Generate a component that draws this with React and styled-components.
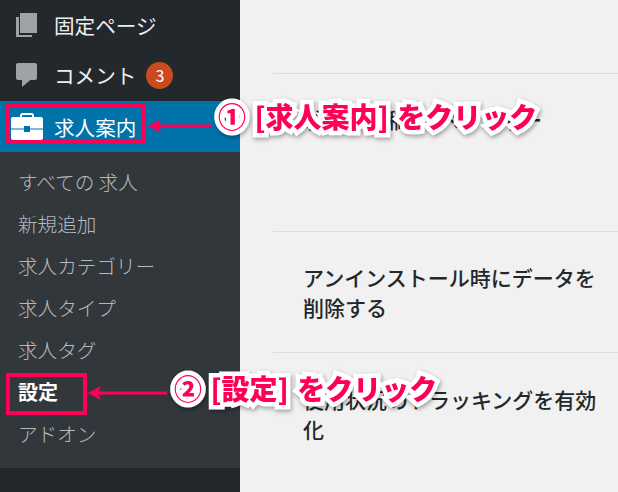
import React from 'react';
import styled, { createGlobalStyle } from 'styled-components';

const Global = createGlobalStyle`
  html, body { margin: 0; padding: 0; background: #f1f1f1; }
  body { font-family: "Noto Sans CJK JP", "Liberation Sans", sans-serif; }
`;

const Page = styled.div`
  position: relative;
  display: flex;
  width: 618px;
  height: 492px;
  overflow: hidden;
`;

const Sidebar = styled.nav`
  display: flex;
  flex-direction: column;
  width: 240px;
  height: 492px;
  flex-shrink: 0;
  background: #23282d;
`;

const TopItem = styled.div`
  display: flex;
  align-items: center;
  height: ${p => p.$h}px;
  padding-left: 16px;
  color: #eee;
  font-size: 20.6px;
  flex-shrink: 0;
`;

const ActiveItem = styled(TopItem)`
  padding-left: 11px;
  background: #0073aa;
  color: #fff;
`;

const IconSlot = styled.span`
  display: flex;
  width: ${p => p.$w}px;
  flex-shrink: 0;
`;

const Badge = styled.span`
  display: flex;
  align-items: center;
  justify-content: center;
  width: 27px;
  height: 27px;
  margin-left: 10px;
  border-radius: 50%;
  background: #ca4a1f;
  color: #fff;
  font-size: 16px;
`;

const SubMenu = styled.div`
  display: flex;
  flex-direction: column;
  height: 316px;
  padding-top: 8px;
  box-sizing: border-box;
  background: #32373c;
  flex-shrink: 0;
`;

const SubItem = styled.div`
  display: flex;
  align-items: center;
  height: 42px;
  padding-left: 18px;
  font-size: ${p => (p.$current ? '20px' : '19.600px')};
  font-weight: ${p => (p.$current ? 700 : 300)};
  color: ${p => (p.$current ? '#fff' : 'rgba(240,245,250,.7)')};
`;

const Main = styled.main`
  flex: 1;
  display: flex;
  flex-direction: column;
  padding-left: 33px;
  background: #f1f1f1;
  color: #23282d;
`;

const Row = styled.div`
  height: ${p => p.$h}px;
  box-sizing: border-box;
  border-bottom: 1px solid #ddd;
  flex-shrink: 0;
`;

const Label = styled.div`
  padding: ${p => p.$top}px 16px 0 30px;
  font-size: 21px;
  font-weight: 500;
  line-height: 30px;
`;

const Callout = styled.div`
  position: absolute;
  left: ${p => p.$x}px;
  top: ${p => p.$y}px;
  color: #ff0055;
  font-size: 28px;
  font-weight: 900;
  line-height: 36px;
  word-spacing: 2px;
  white-space: nowrap;
  -webkit-text-stroke: 9px #fff;
  paint-order: stroke fill;
  filter: drop-shadow(1px 2px 2px rgba(0,0,0,.35));
`;

const Frame = styled.div`
  position: absolute;
  left: ${p => p.$x}px;
  top: ${p => p.$y}px;
  width: ${p => p.$w}px;
  height: ${p => p.$h}px;
  box-sizing: border-box;
  border: 4px solid #ff0055;
`;

const Arrow = styled.svg`
  position: absolute;
  left: ${p => p.$x}px;
  top: ${p => p.$y}px;
`;

const PagesIcon = () => (
  <svg width="21" height="24" viewBox="0 0 21 24">
    <path d="M4 0h17v20H4z" fill="#9ea3a8" />
    <path d="M0 4h3v18h13v2H0z" fill="#9ea3a8" />
  </svg>
);

const CommentIcon = () => (
  <svg width="21" height="24" viewBox="0 0 21 24">
    <path d="M2 0h17a2 2 0 0 1 2 2v13a2 2 0 0 1-2 2h-4.500L6 24v-7H2a2 2 0 0 1-2-2V2a2 2 0 0 1 2-2z" fill="#9ea3a8" />
  </svg>
);

const CaseIcon = () => (
  <svg width="32" height="27" viewBox="0 0 32 27">
    <path d="M10 4.500V2.500A1.500 1.500 0 0 1 11.500 1h9A1.500 1.500 0 0 1 22 2.500V4.500" fill="none" stroke="#fff" strokeWidth="2" />
    <path d="M2 4h28a2 2 0 0 1 2 2v9.500H19V13h-6v2.500H0V6a2 2 0 0 1 2-2z" fill="#fff" />
    <path d="M0 16.500h13V19h6v-2.500h13V25a2 2 0 0 1-2 2H2a2 2 0 0 1-2-2z" fill="#fff" />
  </svg>
);

const LeftArrow = ({ x, y, width }) => (
  <Arrow $x={x} $y={y} width={width} height="16" viewBox={`0 0 ${width} 16`}>
    <path d={`M${width} 6.500v3H10v-3z`} fill="#ff0055" />
    <path d="M0 8l13-7-3 7 3 7z" fill="#ff0055" />
  </Arrow>
);

const subItems = ['すべての 求人', '新規追加', '求人カテゴリー', '求人タイプ', '求人タグ', '設定', 'アドオン'];

const App = () => (
  <Page>
    <Global />
    <Sidebar>
      <TopItem $h={49}><IconSlot $w={38}><PagesIcon /></IconSlot>固定ページ</TopItem>
      <TopItem $h={52}><IconSlot $w={38}><CommentIcon /></IconSlot>コメント<Badge>3</Badge></TopItem>
      <ActiveItem $h={51}><IconSlot $w={43}><CaseIcon /></IconSlot>求人案内</ActiveItem>
      <SubMenu>
        {subItems.map(item => (
          <SubItem key={item} $current={item === '設定'}>{item}</SubItem>
        ))}
      </SubMenu>
    </Sidebar>
    <Main>
      <Row $h={74} />
      <Row $h={158}><Label $top={30}>求人の投稿と{'\u00a0\u00a0'}ページャー</Label></Row>
      <Row $h={121}><Label $top={30}>アンインストール時にデータを削除する</Label></Row>
      <Label $top={31}>使用状況のトラッキングを有効化</Label>
    </Main>
    <Frame $x={5} $y={103} $w={141} $h={41} />
    <Frame $x={6} $y={373} $w={81} $h={42} />
    <LeftArrow x={148} y={118} width={64} />
    <LeftArrow x={88} y={385} width={79} />
    <Callout $x={218} $y={98}>① [求人案内] をクリック</Callout>
    <Callout $x={174} $y={370}>② [設定] をクリック</Callout>
  </Page>
);

export default App;
